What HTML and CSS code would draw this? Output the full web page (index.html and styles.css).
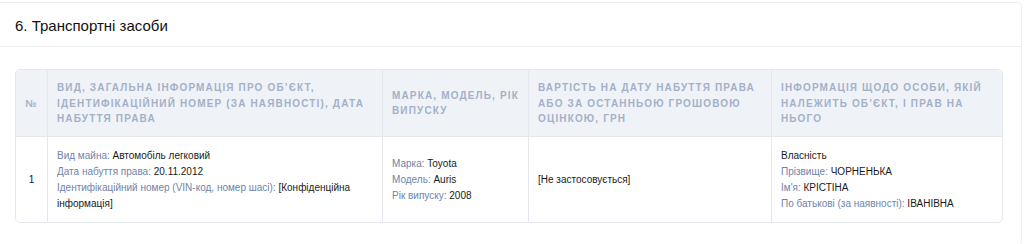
FILE: index.html
```html
<!DOCTYPE html>
<html lang="uk">
<head>
<meta charset="utf-8">
<link rel="stylesheet" href="styles.css">
</head>
<body>
<section class="card">
  <div class="card-header">6. Транспортні засоби</div>
  <div class="card-body">
    <table class="tbl">
      <colgroup>
        <col class="c-num"><col class="c-desc"><col class="c-brand"><col class="c-cost"><col class="c-owner">
      </colgroup>
      <thead>
        <tr>
          <th class="num">№</th>
          <th>Вид, загальна інформація про об’єкт, ідентифікаційний номер (за наявності), дата набуття права</th>
          <th>Марка, модель, рік випуску</th>
          <th>Вартість на дату набуття права або за останньою грошовою оцінкою, грн</th>
          <th>Інформація щодо особи, якій належить об’єкт, і прав на нього</th>
        </tr>
      </thead>
      <tbody>
        <tr>
          <td class="num">1</td>
          <td>
            <div><span class="lbl">Вид майна:</span> Автомобіль легковий</div>
            <div><span class="lbl">Дата набуття права:</span> 20.11.2012</div>
            <div><span class="lbl">Ідентифікаційний номер (VIN-код, номер шасі):</span> [Конфіденційна інформація]</div>
          </td>
          <td>
            <div><span class="lbl">Марка:</span> Toyota</div>
            <div><span class="lbl">Модель:</span> Auris</div>
            <div><span class="lbl">Рік випуску:</span> 2008</div>
          </td>
          <td>[Не застосовується]</td>
          <td>
            <div>Власність</div>
            <div><span class="lbl">Прізвище:</span> ЧОРНЕНЬКА</div>
            <div><span class="lbl">Ім'я:</span> КРІСТІНА</div>
            <div><span class="lbl">По батькові (за наявності):</span> ІВАНІВНА</div>
          </td>
        </tr>
      </tbody>
    </table>
  </div>
</section>
</body>
</html>
```

FILE: styles.css
```css
html, body {
  margin: 0;
  padding: 0;
  background: #fff;
}
body {
  font-family: "Liberation Sans", Arial, sans-serif;
  color: #222;
}
.card {
  margin: 2px 2px 0 -4px;
  border: 1px solid #efefef;
  border-radius: 4px;
  background: #fff;
}
.card-header {
  height: 44px;
  box-sizing: border-box;
  padding: 14px 18px 0 18px;
  font-size: 15px;
  line-height: 18px;
  color: #111;
  border-bottom: 1px solid #efefef;
}
.card-body {
  padding: 22px 18px 22px 18px;
}
.tbl {
  width: 988px;
  border-collapse: separate;
  border-spacing: 0;
  border: 1px solid #e4e8ee;
  border-radius: 5px;
  table-layout: fixed;
}
.c-num { width: 31px; }
.c-desc { width: 335px; }
.c-brand { width: 146px; }
.c-cost { width: 243px; }
.c-owner { width: auto; }
.tbl th {
  background: #eff3f8;
  color: #a3b1c8;
  font-size: 10px;
  font-weight: bold;
  letter-spacing: 1.15px;
  text-transform: uppercase;
  text-align: left;
  line-height: 15.5px;
  padding: 10px 9px 9px 9px;
  vertical-align: middle;
  border-bottom: 1px solid #e4e8ee;
  border-left: 1px solid #e4e8ee;
}
.tbl th:first-child { border-left: none; border-top-left-radius: 5px; }
.tbl th:last-child { border-top-right-radius: 5px; }
.tbl td {
  font-size: 10px;
  line-height: 16px;
  padding: 11px 9px 10px 9px;
  vertical-align: middle;
  border-left: 1px solid #e4e8ee;
  color: #1a1a1a;
}
.tbl td:first-child { border-left: none; }
.tbl .num { text-align: center; padding-left: 4px; padding-right: 4px; }
.lbl { color: #6f83aa; }
```
